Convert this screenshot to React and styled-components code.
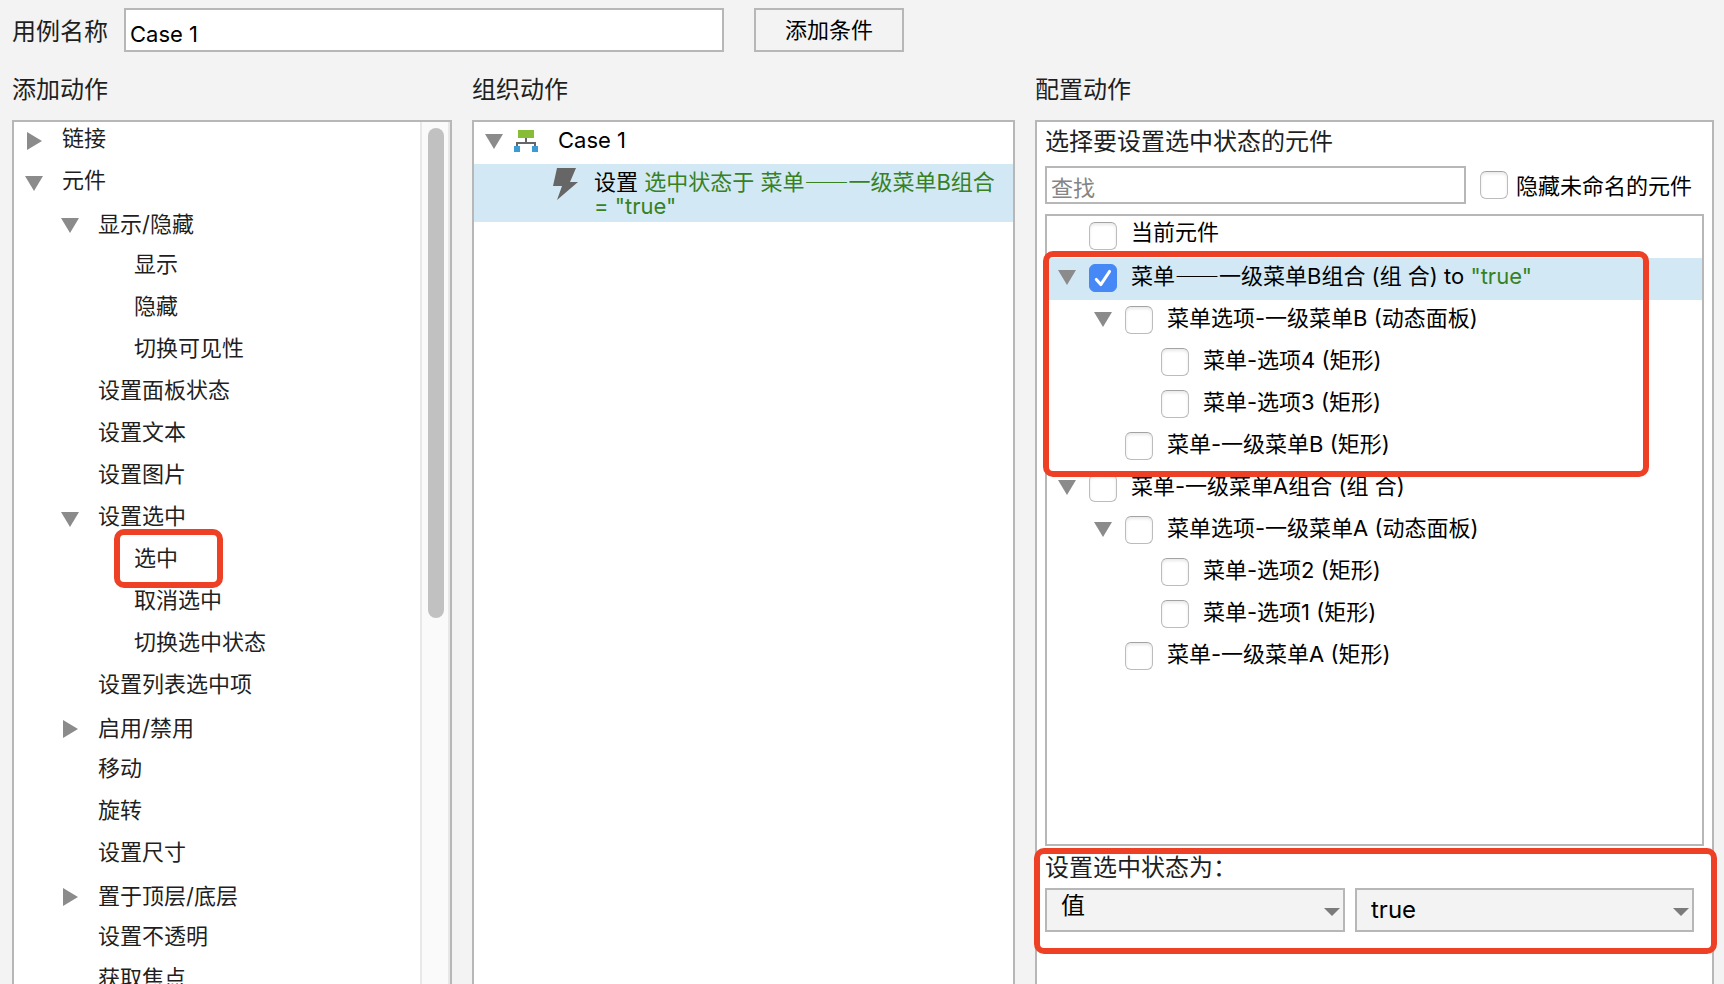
import React, { useState } from "react";
import styled, { createGlobalStyle, css } from "styled-components";

const color = {
  page: "#f3f3f3",
  line: "#b7b7b7",
  text: "#1f1f1f",
  arrow: "#8b8b8b",
  selected: "#d2e9f5",
  value: "#37811f",
  mark: "#ed4025",
};

const GlobalStyle = createGlobalStyle`
  *, *::before, *::after { box-sizing: border-box; }
  body {
    margin: 0;
    background: ${color.page};
    color: ${color.text};
    font: 22px/24px Inter, "Noto Sans CJK SC", sans-serif;
  }
  button, input, select { font: inherit; color: #000; }
  ul { list-style: none; margin: 0; padding: 0; }
`;

const Page = styled.div`
  display: flex;
  flex-direction: column;
  height: 100vh;
  overflow: hidden;
  padding: 8px 10px 0 12px;
`;

const NameBar = styled.header`
  display: flex;
  align-items: center;
  height: 44px;
`;

const NameLabel = styled.label`
  width: 112px;
  padding-top: 4px;
  font-size: 24px;
`;

const TextField = styled.input`
  border: 2px solid ${color.line};
  border-radius: 0;
  background: #fff;
  outline: none;
  padding: 6px 4px 0;
  min-width: 0;
  &::placeholder { color: #858585; opacity: 1; }
`;

const NameField = styled(TextField)`
  width: 600px;
  height: 44px;
  padding-top: 8px;
`;

const ConditionButton = styled.button`
  width: 150px;
  height: 44px;
  margin-left: 30px;
  padding: 0;
  border: 2px solid ${color.line};
  background: ${color.page};
`;

const Columns = styled.main`
  flex: 1;
  min-height: 0;
  display: grid;
  grid-template-columns: minmax(0, 440fr) minmax(0, 543fr) minmax(0, 679fr);
  gap: 20px;
`;

const Column = styled.section`
  display: flex;
  flex-direction: column;
  min-height: 0;
`;

const Heading = styled.h2`
  margin: 0;
  padding: 22px 0 14px;
  font-size: 24px;
  line-height: 32px;
  font-weight: 400;
`;

const Panel = styled.div`
  flex: 1;
  min-height: 0;
  display: flex;
  flex-direction: ${(p) => (p.$row ? "row" : "column")};
  background: #fff;
  border: 2px solid ${color.line};
  border-bottom: 0;
`;

const ActionList = styled.ul`
  flex: 1;
  min-height: 0;
  overflow: hidden;
`;

const ScrollTrack = styled.div`
  width: 30px;
  padding: 6px 4px 0 6px;
  background: #fafafa;
  border: solid #e8e8e8;
  border-width: 0 2px;
`;

const ScrollThumb = styled.div`
  width: 16px;
  height: 490px;
  border-radius: 8px;
  background: #c1c1c1;
`;

const Row = styled.li`
  position: relative;
  display: flex;
  align-items: center;
  height: 42px;
  padding: 0 0 4px ${(p) => 11 + 36 * (p.$level || 0)}px;
  background: ${(p) => (p.$selected ? color.selected : "transparent")};
`;

const ArrowSlot = styled.span`
  flex: none;
  width: 18px;
  height: 18px;
  margin-right: ${(p) => p.$gap}px;
`;

const ArrowButton = styled.button`
  display: block;
  width: 18px;
  height: 18px;
  padding: 0;
  border: 0;
  background: none;
  svg { display: block; fill: ${color.arrow}; }
`;

/* Lines made only of Chinese characters sit a little higher in their row. */
const textPosition = css`
  white-space: nowrap;
  padding: 0 0 ${(p) => (p.$cjkOnly ? 6 : 2)}px;
`;

const ActionButton = styled.button`
  ${textPosition}
  border: 0;
  background: none;
  color: ${color.text};
  text-align: left;
`;

const WidgetLabel = styled.label`
  ${textPosition}
  color: #000;
`;

/* A line height of 1px keeps the second font from stretching the line. */
const Dash = styled.span`
  font-family: "Noto Sans CJK SC", sans-serif;
  font-variant-east-asian: full-width;
  line-height: 1px;
`;

const Value = styled.span`
  color: ${color.value};
`;

const Mark = styled.span`
  position: absolute;
  z-index: 1;
  border: 6px solid ${color.mark};
  border-radius: 10px;
  pointer-events: none;
`;

const ActionMark = styled(Mark)`
  top: -13px;
  left: 100px;
  width: 109px;
  height: 59px;
`;

const GroupMark = styled(Mark)`
  inset: -7px 53px -9px -4px;
`;

const StateMark = styled(Mark)`
  inset: 2px -13px 30px -11px;
`;

const CaseIcon = styled.svg`
  flex: none;
  margin-right: 20px;
`;

const ActionDetail = styled.li`
  display: flex;
  align-items: flex-start;
  padding: 4px 12px 4px 79px;
  background: ${color.selected};
  color: #000;
  svg { flex: none; margin-right: 16px; }
`;

const DetailText = styled.p`
  margin: 0;
  padding-top: 2px;
`;

const ConfigPanel = styled(Panel)`
  padding: 0 8px;
`;

const SubHeading = styled.h3`
  margin: 0;
  padding: 4px 0 8px;
  font-size: 24px;
  line-height: 32px;
  font-weight: 400;
`;

const SearchBar = styled.div`
  display: flex;
  align-items: center;
  height: 38px;
  margin-bottom: 10px;
  padding-right: 12px;
`;

const SearchField = styled(TextField)`
  flex: 1;
  height: 38px;
  margin-right: 14px;
`;

const HideLabel = styled.label`
  color: #000;
  padding: 2px 0 0 8px;
`;

const CheckWrap = styled.span`
  position: relative;
  flex: none;
  width: 28px;
  height: 28px;
  svg { position: absolute; inset: 0; pointer-events: none; }
`;

const CheckInput = styled.input`
  appearance: none;
  display: block;
  width: 28px;
  height: 28px;
  margin: 0;
  border: 1px solid #bcbcbc;
  border-top-color: #a3a3a3;
  border-radius: 6px;
  background: #fff;
  box-shadow: inset 0 2px 3px #e9e9e9;
  &:checked {
    background: #4688f5;
    border-color: #4688f5;
    box-shadow: none;
  }
`;

const TreeCheck = styled.span`
  margin: 2px 14px 0 0;
`;

const WidgetTree = styled.div`
  flex: 1;
  min-height: 0;
  border: 2px solid ${color.line};
`;

const MarkedGroup = styled.div`
  position: relative;
`;

const StateSection = styled.div`
  position: relative;
  height: 138px;
`;

const StateTitle = styled(SubHeading)`
  padding: 6px 0 4px;
`;

const SelectRow = styled.div`
  display: grid;
  grid-template-columns: minmax(0, 300fr) minmax(0, 339fr);
  gap: 10px;
  padding-right: 10px;
`;

const SelectWrap = styled.div`
  position: relative;
  svg {
    position: absolute;
    top: 20px;
    right: 5px;
    fill: #7b7b7b;
    pointer-events: none;
  }
`;

const Select = styled.select`
  appearance: none;
  display: block;
  width: 100%;
  height: 44px;
  padding: 0 30px ${(p) => (p.$cjkOnly ? 8 : 0)}px 14px;
  border: 2px solid ${color.line};
  border-radius: 0;
  background: ${color.page};
  font-size: 24px;
  outline: none;
`;

const isCjkOnly = (text) => !/[\x20-\x7e]/.test(text);

const actions = [
  { text: "链接", level: 0, arrow: "right" },
  { text: "元件", level: 0, arrow: "down" },
  { text: "显示/隐藏", level: 1, arrow: "down" },
  { text: "显示", level: 2 },
  { text: "隐藏", level: 2 },
  { text: "切换可见性", level: 2 },
  { text: "设置面板状态", level: 1 },
  { text: "设置文本", level: 1 },
  { text: "设置图片", level: 1 },
  { text: "设置选中", level: 1, arrow: "down" },
  { text: "选中", level: 2, marked: true },
  { text: "取消选中", level: 2 },
  { text: "切换选中状态", level: 2 },
  { text: "设置列表选中项", level: 1 },
  { text: "启用/禁用", level: 1, arrow: "right" },
  { text: "移动", level: 1 },
  { text: "旋转", level: 1 },
  { text: "设置尺寸", level: 1 },
  { text: "置于顶层/底层", level: 1, arrow: "right" },
  { text: "设置不透明", level: 1 },
  { text: "获取焦点", level: 1 },
];

const groupB = [
  { id: "b", text: "菜单——一级菜单B组合 (组 合)", level: 0, arrow: "down", value: "\"true\"" },
  { id: "b-panel", text: "菜单选项-一级菜单B (动态面板)", level: 1, arrow: "down" },
  { id: "b-4", text: "菜单-选项4 (矩形)", level: 2 },
  { id: "b-3", text: "菜单-选项3 (矩形)", level: 2 },
  { id: "b-rect", text: "菜单-一级菜单B (矩形)", level: 1 },
];

const groupA = [
  { id: "a", text: "菜单-一级菜单A组合 (组 合)", level: 0, arrow: "down" },
  { id: "a-panel", text: "菜单选项-一级菜单A (动态面板)", level: 1, arrow: "down" },
  { id: "a-2", text: "菜单-选项2 (矩形)", level: 2 },
  { id: "a-1", text: "菜单-选项1 (矩形)", level: 2 },
  { id: "a-rect", text: "菜单-一级菜单A (矩形)", level: 1 },
];

function withDashes(text) {
  return text
    .split(/(——)/)
    .map((part, i) => (part === "——" ? <Dash key={i}>{part}</Dash> : part));
}

function Arrow({ direction, gap, name }) {
  return (
    <ArrowSlot $gap={gap}>
      {direction && (
        <ArrowButton type="button" aria-label={name} aria-expanded={direction === "down"}>
          <svg width="18" height="18" viewBox="0 0 18 18" aria-hidden="true">
            <path d={direction === "down" ? "M0 2H18L9 17Z" : "M2 0V18L17 9Z"} />
          </svg>
        </ArrowButton>
      )}
    </ArrowSlot>
  );
}

function Checkbox({ id, initial = false }) {
  const [checked, setChecked] = useState(initial);
  return (
    <CheckWrap>
      <CheckInput
        id={id}
        type="checkbox"
        checked={checked}
        onChange={(e) => setChecked(e.target.checked)}
      />
      {checked && (
        <svg width="28" height="28" viewBox="0 0 28 28" aria-hidden="true">
          <path
            d="M7.3 15.4L11.8 20.6L20.6 7.4"
            fill="none"
            stroke="#fff"
            strokeWidth="3"
            strokeLinecap="round"
            strokeLinejoin="round"
          />
        </svg>
      )}
    </CheckWrap>
  );
}

function WidgetRow({ id, text, level, arrow, value }) {
  return (
    <Row $level={level} $selected={Boolean(value)}>
      <Arrow direction={arrow} gap={13} name={text} />
      <TreeCheck>
        <Checkbox id={id} initial={Boolean(value)} />
      </TreeCheck>
      <WidgetLabel htmlFor={id} $cjkOnly={isCjkOnly(text)}>
        {withDashes(text)}
        {value && (
          <>
            {" to "}
            <Value>{value}</Value>
          </>
        )}
      </WidgetLabel>
    </Row>
  );
}

function DropDown({ label, options }) {
  return (
    <SelectWrap>
      <Select aria-label={label} $cjkOnly={isCjkOnly(options[0])}>
        {options.map((option) => (
          <option key={option}>{option}</option>
        ))}
      </Select>
      <svg width="16" height="8" viewBox="0 0 16 8" aria-hidden="true">
        <path d="M0 0H16L8 8Z" />
      </svg>
    </SelectWrap>
  );
}

export default function App() {
  return (
    <Page lang="zh-CN">
      <GlobalStyle />
      <NameBar>
        <NameLabel htmlFor="case-name">用例名称</NameLabel>
        <NameField id="case-name" type="text" defaultValue="Case 1" />
        <ConditionButton type="button">添加条件</ConditionButton>
      </NameBar>
      <Columns>
        <Column>
          <Heading>添加动作</Heading>
          <Panel $row>
            <ActionList>
              {actions.map(({ text, level, arrow, marked }) => (
                <Row key={text} $level={level}>
                  <Arrow direction={arrow} gap={19} name={text} />
                  <ActionButton type="button" $cjkOnly={isCjkOnly(text)}>
                    {text}
                  </ActionButton>
                  {marked && <ActionMark />}
                </Row>
              ))}
            </ActionList>
            <ScrollTrack>
              <ScrollThumb />
            </ScrollTrack>
          </Panel>
        </Column>

        <Column>
          <Heading>组织动作</Heading>
          <Panel>
            <ul>
              <Row>
                <Arrow direction="down" gap={11} name="Case 1" />
                <CaseIcon width="24" height="22" viewBox="0 0 24 22" aria-hidden="true">
                  <path d="M12 8V13M3 16V13H21V16" fill="none" stroke="#666" strokeWidth="2" />
                  <rect x="4" width="16" height="8" fill="#86bc36" />
                  <rect y="16" width="6" height="6" fill="#3c9ad5" />
                  <rect x="18" y="16" width="6" height="6" fill="#3c9ad5" />
                </CaseIcon>
                <WidgetLabel as="span">Case 1</WidgetLabel>
              </Row>
              <ActionDetail>
                <svg width="25" height="32" viewBox="0 0 25 32" aria-hidden="true">
                  <path d="M4 0H23L17 14H25L4 32L9 18H0Z" fill="#666" />
                </svg>
                <DetailText>
                  设置 <Value>选中状态于 {withDashes("菜单——一级菜单B组合")} = "true"</Value>
                </DetailText>
              </ActionDetail>
            </ul>
          </Panel>
        </Column>

        <Column>
          <Heading>配置动作</Heading>
          <ConfigPanel>
            <SubHeading>选择要设置选中状态的元件</SubHeading>
            <SearchBar>
              <SearchField type="text" placeholder="查找" aria-label="查找" />
              <Checkbox id="hide-unnamed" />
              <HideLabel htmlFor="hide-unnamed">隐藏未命名的元件</HideLabel>
            </SearchBar>
            <WidgetTree>
              <ul>
                <WidgetRow id="current" text="当前元件" level={0} />
              </ul>
              <MarkedGroup>
                <ul>
                  {groupB.map((widget) => (
                    <WidgetRow key={widget.id} {...widget} />
                  ))}
                </ul>
                <GroupMark />
              </MarkedGroup>
              <ul>
                {groupA.map((widget) => (
                  <WidgetRow key={widget.id} {...widget} />
                ))}
              </ul>
            </WidgetTree>
            <StateSection>
              <StateTitle>设置选中状态为：</StateTitle>
              <SelectRow>
                <DropDown label="类型" options={["值"]} />
                <DropDown label="选中状态" options={["true", "false"]} />
              </SelectRow>
              <StateMark />
            </StateSection>
          </ConfigPanel>
        </Column>
      </Columns>
    </Page>
  );
}
